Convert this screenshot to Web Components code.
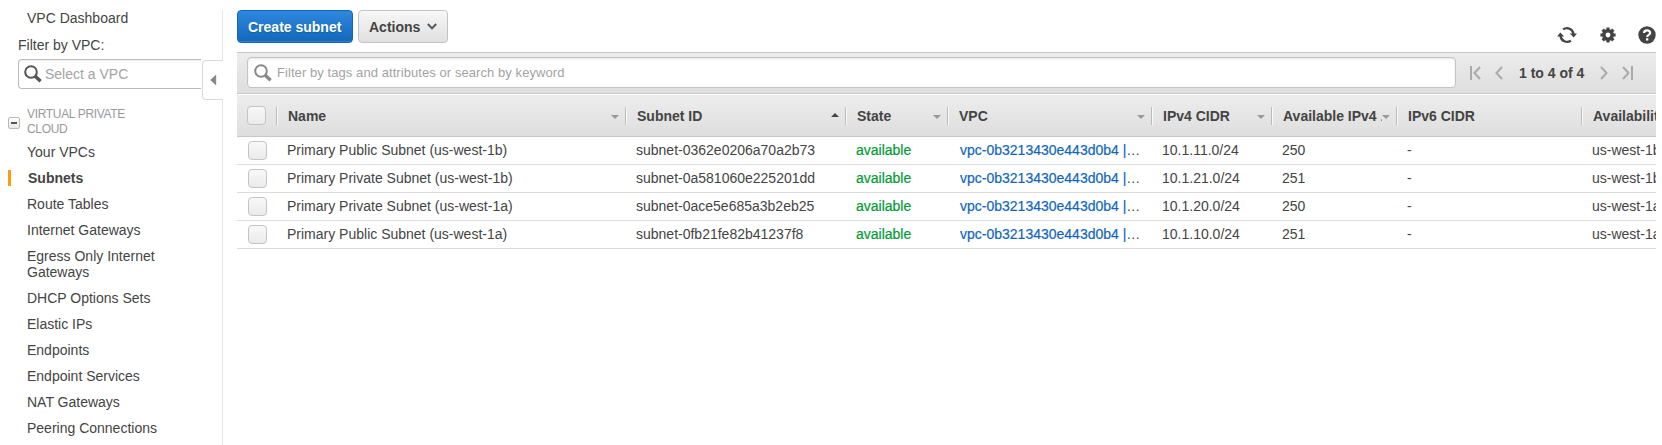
<!DOCTYPE html>
<html lang="en">
<head>
<meta charset="utf-8">
<title>Subnets | VPC Management Console</title>
<style>
html,body{margin:0;height:100%;overflow:hidden;background:#fff}
body{font:14px/16px "Liberation Sans",Arial,sans-serif;color:#444}
</style>
</head>
<body>
<vpc-console></vpc-console>
<script>
const define = (name, html, setup) => {
  const t = document.createElement('template');
  t.innerHTML = '<style>*{box-sizing:border-box}</style>' + html;
  customElements.define(name, class extends HTMLElement {
    constructor() {
      super();
      this.attachShadow({mode: 'open'}).append(t.content.cloneNode(true));
    }
    connectedCallback() { if (setup) setup(this, this.shadowRoot); }
  });
};

define('search-icon', `
<style>:host{display:block;width:18px;height:18px;flex:none}svg{display:block}</style>
<svg width="18" height="18" viewBox="0 0 18 18" fill="none" stroke="currentColor"><circle cx="7" cy="7" r="5.8" stroke-width="2"/><path d="M11 11L16.6 16.2" stroke-width="3.4"/></svg>`);

define('nav-item', `
<style>
:host{display:block;padding:5px 40px 5px 27px;line-height:16px}
:host([active]){font-weight:bold;background:linear-gradient(#ff9a14,#ff9a14) 8px 5px/3px 16px no-repeat;padding-left:28px}
</style><slot></slot>`);

define('nav-section', `
<style>
:host{display:flex;align-items:center;padding:18px 60px 2px 8px;gap:7px}
.box{width:12px;height:12px;border:1px solid #bbb;border-radius:2px;background:linear-gradient(#fff,#e8e8e8);display:flex;align-items:center;justify-content:center;flex:none;margin-top:2px}
.box i{width:6px;height:2px;background:#555}
span{font-size:12px;line-height:15px;color:#999;letter-spacing:-.33px}
</style><div class="box"><i></i></div><span><slot></slot></span>`);

define('side-nav', `
<style>
:host{display:block;width:223px;height:435px;margin-top:10px;border-right:1px solid #e6e6e6;position:relative;flex:none}
.dash{padding-left:27px;line-height:16px}
.lbl{padding:11px 0 6px 18px;line-height:16px}
.field{margin-left:18px;width:183px;height:30px;border:1px solid #bbb;border-right:0;border-radius:4px 0 0 4px;display:flex;align-items:center;padding-left:5px;gap:3px;color:#a3a3a3;box-shadow:inset 0 1px 1px #eee}
search-icon{color:#555}
.tab{position:absolute;left:202px;top:50px;width:21px;height:40px;background:#fff;border:1px solid #d9d9d9;border-right:0;border-radius:4px 0 0 4px;display:flex;align-items:center;padding-left:7px}
</style>
<div class="dash">VPC Dashboard</div>
<div class="lbl">Filter by VPC:</div>
<div class="field"><search-icon></search-icon><span>Select a VPC</span></div>
<div class="tab"><svg width="7" height="12" viewBox="0 0 7 12"><path d="M6.2 .5V11.5L.2 6z" fill="#888"/></svg></div>
<nav-section>VIRTUAL PRIVATE<br>CLOUD</nav-section>
<nav-item>Your VPCs</nav-item>
<nav-item active>Subnets</nav-item>
<nav-item>Route Tables</nav-item>
<nav-item>Internet Gateways</nav-item>
<nav-item>Egress Only Internet Gateways</nav-item>
<nav-item>DHCP Options Sets</nav-item>
<nav-item>Elastic IPs</nav-item>
<nav-item>Endpoints</nav-item>
<nav-item>Endpoint Services</nav-item>
<nav-item>NAT Gateways</nav-item>
<nav-item>Peering Connections</nav-item>`);

define('console-button', `
<style>
:host{display:flex;align-items:center;height:33px;padding:1px 10px 0;border:1px solid #c3c3c3;border-radius:4px;background:linear-gradient(#f7f7f7,#e0e0e0);font-weight:bold;box-shadow:inset 0 1px #fff8;white-space:nowrap;box-sizing:border-box}
:host([primary]){color:#fff;border-color:#1166bb;background:linear-gradient(#2e88de,#1467bb);text-shadow:0 1px 1px #0557;box-shadow:inset 0 -1px #3480cc}
</style><slot></slot>`);

define('action-bar', `
<style>
:host{display:flex;height:52px;padding-top:10px;gap:5px}
console-button:first-of-type{width:116px}console-button:nth-of-type(2){width:90px}
.chev{margin-left:7px;margin-top:-2px}
.icons{margin-left:auto;display:flex;align-items:center;height:20px;margin-top:15px;color:#444}
svg{display:block;flex:none}
</style>
<console-button primary>Create subnet</console-button>
<console-button>Actions<svg class="chev" width="10" height="7" viewBox="0 0 10 7"><path d="M.8 1L5 5.4 9.2 1" fill="none" stroke="#555" stroke-width="2"/></svg></console-button>
<div class="icons">
<svg width="20" height="18" viewBox="0 0 20 18" style="margin-right:23px"><path d="M6.1 3.4A6.6 6.6 0 0 1 16.5 8M13.9 14.6A6.6 6.6 0 0 1 3.5 10" fill="none" stroke="currentColor" stroke-width="2.3"/><path d="M12.8 7.4H20L16.7 11.6zM0 10.6H7.2L3.3 6.4z" fill="currentColor"/></svg>
<svg width="16" height="16" viewBox="0 0 16 16" style="margin-right:22px"><g fill="currentColor"><path fill-rule="evenodd" d="M8 2a6 6 0 1 0 0 12A6 6 0 0 0 8 2zm0 3.6a2.4 2.4 0 1 1 0 4.8 2.4 2.4 0 0 1 0-4.8z"/><path d="M6.4.4h3.2v3H6.4zM6.4 12.6h3.2v3H6.4zM.4 6.4h3v3.2h-3zM12.6 6.4h3v3.2h-3zM1.5 3.8l2.3-2.3 2 2-2.3 2.3zM10.2 12.5l2.3-2.3 2 2-2.3 2.3zM12.2 1.5l2.3 2.3-2 2-2.3-2.3zM3.5 10.2l2.3 2.3-2 2-2.3-2.3z"/></g></svg>
<svg width="18" height="18" viewBox="0 0 18 18"><circle cx="9" cy="9" r="8.7" fill="currentColor"/><path d="M6 7.1C6 3.6 12.1 3.5 12.1 6.9 12.1 8.9 9.2 8.8 9.2 11" fill="none" stroke="#fff" stroke-width="2.2"/><path d="M8 12.2h2.3v2.3H8z" fill="#fff"/></svg>
</div>`);

define('filter-bar', `
<style>
:host{display:flex;align-items:center;height:42px;border-top:1px solid #c8c8c8;border-bottom:1px solid #c8c8c8;background:linear-gradient(#ececec,#dedede);padding:0 22px 1px 10px;box-sizing:border-box}
.field{flex:none;width:1209px;height:31px;border:1px solid #c4c4c4;border-radius:4px;background:#fff;display:flex;align-items:center;padding-left:6px;gap:5px;color:#a3a3a3;font-size:13px;letter-spacing:.07px;box-shadow:inset 0 1px 2px #e4e4e4}
search-icon{color:#888}
svg{display:block;flex:none;fill:none;stroke:#aaa;stroke-width:2}
.pg{display:flex;align-items:center;margin-left:14px}
b{margin:1px 16px 0 16px;white-space:nowrap}
</style>
<div class="field"><search-icon></search-icon><span>Filter by tags and attributes or search by keyword</span></div>
<div class="pg">
<svg width="11" height="14" viewBox="0 0 11 14"><path d="M1 0V14M10 1L4.5 7 10 13"/></svg>
<svg width="8" height="14" viewBox="0 0 8 14" style="margin-left:14px"><path d="M7 1L1.5 7 7 13"/></svg>
<b>1 to 4 of 4</b>
<svg width="8" height="14" viewBox="0 0 8 14"><path d="M1 1L6.5 7 1 13"/></svg>
<svg width="11" height="14" viewBox="0 0 11 14" style="margin-left:14px"><path d="M10 0V14M1 1L6.5 7 1 13"/></svg>
</div>`);

define('check-box', `
<style>:host{display:block;width:19px;height:19px;border:1px solid #c4c4c4;border-radius:4px;background:linear-gradient(#f8f8f8,#ebebeb);box-sizing:border-box}</style>`);

define('column-head', `
<style>
:host{display:flex;align-items:center;height:18px;border-left:1px solid #bbb;box-shadow:inset 1px 0 #fafafa;padding:0 6px 0 11px;font-weight:bold;white-space:nowrap;min-width:0;box-sizing:border-box}
:host(:last-of-type){padding-right:0}
span{flex:1;min-width:0;overflow:hidden}
i{width:0;height:0;border:4px solid transparent;border-bottom:0;border-top-color:#999;flex:none;margin-top:2px;display:none}
:host([sort]) i{display:block}
:host([sort=asc]) i{border-bottom:4px solid #444;border-top:0;margin-top:-2px}
</style><span><slot></slot></span><i></i>`);

define('table-head', `
<style>
:host{display:grid;grid-template-columns:var(--cols);align-items:center;height:43px;padding-top:1px;border-top:1px solid #fff;border-bottom:1px solid #c8c8c8;background:linear-gradient(#ededed,#dedede);box-sizing:border-box}
check-box{margin:0 0 1px 10px}
small{font:inherit;font-weight:normal;color:#777;margin-left:3px}
</style>
<check-box></check-box>
<column-head sort="desc">Name</column-head>
<column-head sort="asc">Subnet ID</column-head>
<column-head sort="desc">State</column-head>
<column-head sort="desc">VPC</column-head>
<column-head sort="desc">IPv4 CIDR</column-head>
<column-head sort="desc">Available IPv4<small>.</small></column-head>
<column-head>IPv6 CIDR</column-head>
<column-head>Availability</column-head>`);

define('subnet-row', `
<style>
:host{display:grid;grid-template-columns:var(--cols);align-items:start;height:28px;padding-top:4px;border-bottom:1px solid #dcdcdc;white-space:nowrap;box-sizing:border-box}
check-box{margin-left:11px}
div{padding:1px 0 0 11px;min-width:0}
.state{color:#093;-webkit-text-stroke:.2px #093}.vpc{padding-left:13px}.vpc b{font-weight:normal;color:#1166bb;-webkit-text-stroke:.2px #1166bb}
</style>
<check-box></check-box><div id="name"></div><div id="id"></div><div class="state">available</div><div class="vpc"><b>vpc-0b3213430e443d0b4 |</b>…</div><div id="cidr"></div><div id="free"></div><div>-</div><div id="zone"></div>`,
(el, root) => { for (const k of ['name', 'id', 'cidr', 'free', 'zone']) root.getElementById(k).textContent = el.dataset[k]; });

define('vpc-console', `
<style>
:host{display:flex;height:445px;overflow:hidden}
main{width:1419px;margin-left:14px;overflow:hidden;--cols:39px 349px 220px 102px 204px 120px 125px 185px 75px}
</style>
<side-nav></side-nav>
<main>
<action-bar></action-bar>
<filter-bar></filter-bar>
<table-head></table-head>
<subnet-row data-name="Primary Public Subnet (us-west-1b)" data-id="subnet-0362e0206a70a2b73" data-cidr="10.1.11.0/24" data-free="250" data-zone="us-west-1b"></subnet-row>
<subnet-row data-name="Primary Private Subnet (us-west-1b)" data-id="subnet-0a581060e225201dd" data-cidr="10.1.21.0/24" data-free="251" data-zone="us-west-1b"></subnet-row>
<subnet-row data-name="Primary Private Subnet (us-west-1a)" data-id="subnet-0ace5e685a3b2eb25" data-cidr="10.1.20.0/24" data-free="250" data-zone="us-west-1a"></subnet-row>
<subnet-row data-name="Primary Public Subnet (us-west-1a)" data-id="subnet-0fb21fe82b41237f8" data-cidr="10.1.10.0/24" data-free="251" data-zone="us-west-1a"></subnet-row>
</main>`);
</script>
</body>
</html>
